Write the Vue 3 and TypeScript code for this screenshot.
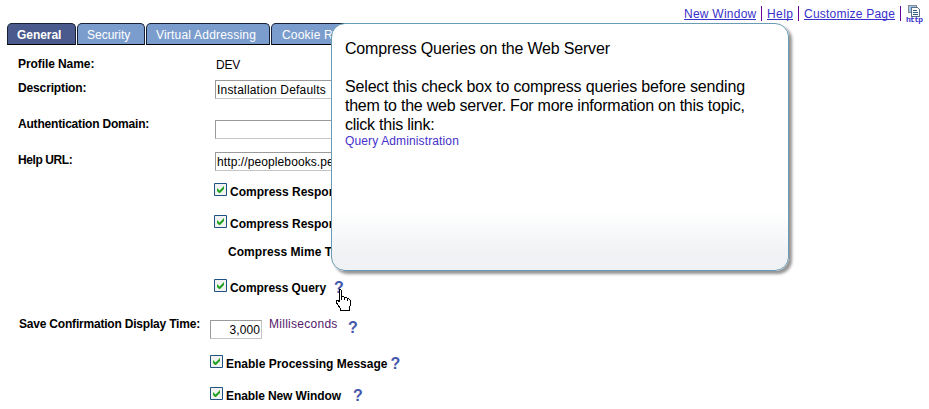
<script setup lang="ts">
interface TextField {
  id: string
  label: string
  value: string
}

const tabs: { id: string; label: string }[] = [
  { id: 'general', label: 'General' },
  { id: 'security', label: 'Security' },
  { id: 'virtual', label: 'Virtual Addressing' },
  { id: 'cookie', label: 'Cookie Rules' },
]

const fields: TextField[] = [
  { id: 'description', label: 'Description:', value: 'Installation Defaults' },
  { id: 'domain', label: 'Authentication Domain:', value: '' },
  { id: 'help', label: 'Help URL:', value: 'http://peoplebooks.peo' },
]

const responses: string[] = ['Compress Responses', 'Compress Response References']

const options: { id: string; label: string }[] = [
  { id: 'processing', label: 'Enable Processing Message' },
  { id: 'window', label: 'Enable New Window' },
]
</script>

<template>
  <div class="page">
    <nav class="links">
      <a class="l-new">New Window</a><i></i><a class="l-help">Help</a><i></i><a class="l-page">Customize Page</a><i></i>
      <span class="http">
        <svg width="13" height="12" viewBox="0 0 13 12" shape-rendering="crispEdges">
          <path d="M.5.5h8v7h-8z" fill="#9dc6f0" stroke="#8a8a8a" />
          <path d="M3.500 2.500h6l2 2v7h-8z" fill="#fff" stroke="#5b6f86" />
          <path d="M5 5.500h4M5 7.500h5M5 9.500h5" stroke="#315a85" />
        </svg>
        <b>http</b>
      </span>
    </nav>

    <div class="tabs">
      <div v-for="(t, n) in tabs" :key="t.id" class="tab" :class="['t-' + t.id, { active: n === 0 }]"><span>{{ t.label }}</span></div>
    </div>

    <main class="form">
      <div class="row profile"><label class="lab w-profile">Profile Name:</label><span class="plain">DEV</span></div>
      <div v-for="f in fields" :key="f.id" class="row" :class="'r-' + f.id">
        <label class="lab" :class="'w-' + f.id">{{ f.label }}</label>
        <div class="input"><span :class="'v-' + f.id">{{ f.value }}</span></div>
      </div>
      <div v-for="r in responses" :key="r" class="row check">
        <svg class="box" viewBox="0 0 13 13"><path class="frame" d="M.5.5h12v12H.5z" /><path class="tick" d="M3 5v3l2 2h1l4-4V3L5.500 7.500z" /></svg>
        <span class="cap">{{ r }}</span>
      </div>
      <div class="row mime"><span class="cap">Compress Mime Types</span></div>
      <div class="row check query">
        <svg class="box" viewBox="0 0 13 13"><path class="frame" d="M.5.5h12v12H.5z" /><path class="tick" d="M3 5v3l2 2h1l4-4V3L5.500 7.500z" /></svg>
        <span class="cap">Compress Query</span><b class="q">?</b>
      </div>
      <div class="row save">
        <label class="lab w-save">Save Confirmation Display Time:</label>
        <div class="input num"><span>3,000</span></div>
        <span class="unit">Milliseconds</span><b class="q">?</b>
      </div>
      <div v-for="o in options" :key="o.id" class="row check low" :class="'o-' + o.id">
        <svg class="box" viewBox="0 0 13 13"><path class="frame" d="M.5.5h12v12H.5z" /><path class="tick" d="M3 5v3l2 2h1l4-4V3L5.500 7.500z" /></svg>
        <span class="cap">{{ o.label }}</span><b class="q">?</b>
      </div>
    </main>

    <aside class="tip">
      <p class="title">Compress Queries on the Web Server</p>
      <p class="b1">Select this check box to compress queries before sending</p>
      <p class="b2">them to the web server. For more information on this topic,</p>
      <p class="b3">click this link:</p>
      <a>Query Administration</a>
    </aside>

    <svg class="hand" width="18" height="22" viewBox="0 0 18 22" shape-rendering="crispEdges">
      <path d="M5.500.5h1l1 1v6h2l1 1h2l1 1h1l1.500 1.500v6l-1 1v3h-9v-2l-4-6v-2h2l1 2v-10z" fill="#fff" stroke="#000" />
      <path d="M7.500 7v4M10.500 8v3M13.500 9v3" stroke="#000" />
    </svg>
  </div>
</template>

<style>
body { background: #fff; overflow: hidden; }
</style>

<style scoped>
.page { position: relative; width: 929px; height: 409px; overflow: hidden; font: 12px/14px "Liberation Sans", Arial, sans-serif; color: #000; }
.links { display: flex; height: 23px; padding: 7px 7px 0 0; box-sizing: border-box; justify-content: flex-end; color: #3730cb; }
.links a { height: 13px; border-bottom: 1px solid #3730cb; box-sizing: border-box; line-height: 14px; white-space: nowrap; flex: none; }
.links i { width: 1px; height: 15px; margin: -1px 5px 0; background: #660099; flex: none; }
.l-new { width: 72px; letter-spacing: .25px; }
.l-help { width: 26px; letter-spacing: .4px; }
.l-page { width: 91px; letter-spacing: .22px; }
.http { display: flex; flex-direction: column; width: 16px; height: 19px; margin-top: -2px; flex: none; }
.http svg { margin-left: 2px; flex: none; }
.http b { font: bold 8px/6px "Liberation Mono", monospace; letter-spacing: -.7px; }
.tabs { display: flex; height: 22px; padding-left: 7px; gap: 1px; }
.tab { box-sizing: border-box; height: 22px; border: 1px solid #152238; border-bottom-color: #000; border-radius: 5px 5px 0 0; background: #7b9dcd; color: #fff; line-height: 22px; padding-left: 9px; white-space: nowrap; }
.tab.active { background: #4a5a8c; font-weight: bold; }
.t-general { width: 69px; letter-spacing: -.05px; }
.t-security { width: 68px; }
.t-virtual { width: 124px; letter-spacing: .2px; }
.t-cookie { width: 100px; padding-left: 10px; letter-spacing: .2px; }
.form { display: flex; flex-direction: column; }
.row { display: flex; align-items: flex-start; height: 36px; box-sizing: border-box; padding-left: 18px; white-space: nowrap; flex: none; }
.lab { width: 197px; font-weight: bold; }
.w-profile { letter-spacing: -.08px; }
.w-description { letter-spacing: -.14px; padding-top: 1px; }
.w-domain { letter-spacing: -.19px; }
.w-help { letter-spacing: -.4px; padding-top: 1px; }
.w-save { letter-spacing: -.2px; }
.profile { height: 31px; padding-top: 12px; }
.plain { margin: 1px 0 0 1px; letter-spacing: -.15px; }
.r-description { padding-top: 4px; }
.r-domain { padding-top: 5px; }
.r-help { height: 27px; padding-top: 4px; }
.input { box-sizing: border-box; width: 180px; height: 19px; border: 1px solid #9b9b9b; border-right-color: #c5c5c5; border-bottom-color: #c5c5c5; line-height: 18px; padding-left: 1px; }
.v-description { letter-spacing: .2px; }
.v-help { letter-spacing: .1px; }
.r-domain .input { margin-top: 3px; }
.check { height: 32px; padding: 8px 0 0 214px; }
.box { width: 13px; height: 13px; flex: none; margin-right: 3px; }
.frame { fill: #f2f3f0; stroke: #1d5281; }
.tick { fill: #23a123; }
.cap { font-weight: bold; margin-top: 2px; }
.mime { height: 32px; padding: 4px 0 0 228px; }
.mime .cap { letter-spacing: .06px; }
.query { height: 36px; }
.query .cap { letter-spacing: -.05px; }
.q { color: #4357ab; font-size: 16px; line-height: 16px; }
.query .q { margin: 1px 0 0 8px; }
.save { height: 40px; padding: 10px 0 0 19px; }
.save .lab { width: 191px; }
.save .input { width: 52px; margin-top: 3px; text-align: right; padding-right: 1px; letter-spacing: .1px; }
.unit { color: #551a6b; margin-left: 7px; width: 72px; letter-spacing: .27px; }
.save .q { margin: 3px 0 0 7px; }
.low { padding-left: 210px; }
.low .q { margin: 1px 0 0 3px; }
.o-window .cap { letter-spacing: -.1px; }
.o-window .q { margin-left: 12px; }
.tip { position: absolute; left: 331px; top: 23px; box-sizing: border-box; width: 458px; height: 248px; padding: 15px 13px; border: 1px solid #699bb5; border-radius: 14px; background: linear-gradient(#fff 76%, #f0f2f4 93%, #eff1f4); box-shadow: 3px 3px 3px rgba(0, 0, 0, .42); font-size: 16px; line-height: 19px; white-space: nowrap; }
.tip p { margin: 0; }
.tip .title { margin-bottom: 19px; letter-spacing: -.18px; }
.b1 { letter-spacing: -.165px; }
.b2 { letter-spacing: -.235px; }
.b3 { letter-spacing: -.25px; }
.tip a { display: block; font-size: 12px; line-height: 14px; color: #4630c9; letter-spacing: .13px; }
.hand { position: absolute; left: 334px; top: 289px; }
</style>
